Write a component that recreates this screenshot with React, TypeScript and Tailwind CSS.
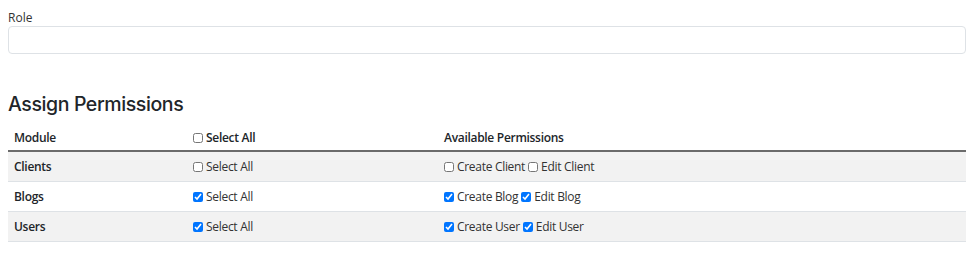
import React from "react";

const rows = [
  { name: "Clients", all: false, perms: [["Create Client", false], ["Edit Client", false]] },
  { name: "Blogs", all: true, perms: [["Create Blog", true], ["Edit Blog", true]] },
  { name: "Users", all: true, perms: [["Create User", true], ["Edit User", true]] },
] as const;

function Box({ checked }: { checked: boolean }) {
  return (
    <input
      type="checkbox"
      defaultChecked={checked}
      className="m-0 mr-[3px] h-[10px] w-[10px] align-[-1px] accent-[#0075ff]"
    />
  );
}

export default function App() {
  return (
    <div className="bg-white px-2 pt-[9px] text-[#212529]" style={{ fontFamily: '"Open Sans", "Noto Sans", sans-serif' }}>
      <label className="block text-[12px] leading-[17px] text-[#333]">Role</label>
      <input type="text" className="mt-0 block h-[28px] w-[958px] rounded-[4px] border border-[#dee2e6] bg-white" />
      <h3
        className="mt-[37px] text-[19.5px] font-medium leading-[26px] tracking-[-0.4px] text-[#212529]"
        style={{ fontFamily: 'Inter, "Open Sans", sans-serif' }}
      >
        Assign Permissions
      </h3>
      <table className="mt-[8px] w-[958px] border-collapse text-[12px] tracking-[-0.3px]">
        <thead>
          <tr className="h-[26px] border-b-2 border-[#6b6b6b]">
            <th className="w-[179px] px-[6px] text-left font-semibold">Module</th>
            <th className="w-[251px] px-[6px] text-left font-semibold">
              <Box checked={false} />Select All
            </th>
            <th className="px-[6px] text-left font-semibold">Available Permissions</th>
          </tr>
        </thead>
        <tbody>
          {rows.map((r, i) => (
            <tr key={r.name} className={`h-[30px] border-b border-[#dee2e6] ${i % 2 === 0 ? "bg-[#f2f2f2]" : "bg-white"}`}>
              <td className="px-[6px] pt-[1px] font-semibold">{r.name}</td>
              <td className="px-[6px] pt-[1px] text-[#333]">
                <Box checked={r.all} />Select All
              </td>
              <td className="px-[6px] pt-[1px] text-[#333]">
                {r.perms.map(([p, c]) => (
                  <span key={p} className="mr-[3px]">
                    <Box checked={c} />{p}
                  </span>
                ))}
              </td>
            </tr>
          ))}
        </tbody>
      </table>
    </div>
  );
}
